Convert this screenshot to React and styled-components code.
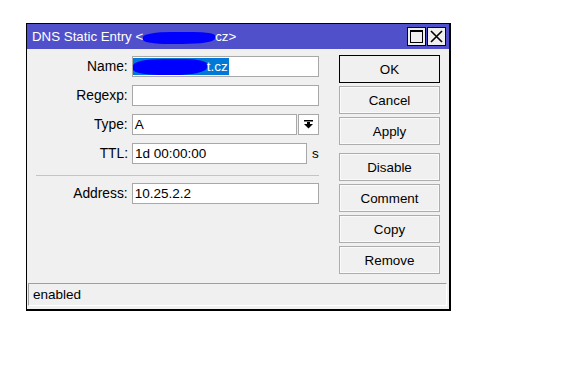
import React from 'react';
import styled, { createGlobalStyle } from 'styled-components';

const Global = createGlobalStyle`
  body {
    margin: 0;
    background: #fff;
    font-family: "Liberation Sans", Arial, sans-serif;
    font-size: 13px;
    color: #000;
  }
`;

const Page = styled.div`
  padding: 23px 0 0 26px;
`;

const Window = styled.div`
  width: 422px;
  height: 285px;
  border: 1px solid #000;
  border-right-width: 2px;
  border-bottom-width: 2px;
  background: #f0f0f0;
  display: flex;
  flex-direction: column;
`;

const TitleBar = styled.div`
  height: 25px;
  background: #5050cb;
  color: #fff;
  display: flex;
  align-items: center;
  padding: 0 3px 0 5px;
  font-size: 13.3px;
`;

const Title = styled.div`
  flex: 1;
  display: flex;
  align-items: center;
  white-space: pre;
`;

const Blob = styled.span`
  display: inline-block;
  width: ${p => p.$w}px;
  height: ${p => p.$h}px;
  background: #0000ff;
  border-radius: 40% 30% 45% 35%;
  transform: ${p => p.$skew || 'none'};
`;

const TitleButtons = styled.div`
  display: flex;
  gap: 1px;
`;

const TitleButton = styled.div`
  width: 17px;
  height: 17px;
  background: #f0f0f0;
  border: 1px solid #000;
  display: flex;
  align-items: center;
  justify-content: center;
`;

const Body = styled.div`
  flex: 1;
  display: flex;
  padding: 7px 9px 0 0;
`;

const Form = styled.div`
  width: 292px;
  display: flex;
  flex-direction: column;
`;

const Row = styled.div`
  display: flex;
  align-items: center;
  height: 21px;
  margin-top: ${p => p.$top ?? 8}px;
`;

const Label = styled.div`
  width: 101px;
  margin-right: 4px;
  text-align: right;
  font-size: 13.8px;
`;

const Field = styled.div`
  box-sizing: border-box;
  width: ${p => p.$w}px;
  height: 21px;
  background: #fff;
  border: 1px solid #a8a8a8;
  padding-left: 2px;
  display: flex;
  align-items: center;
  white-space: pre;
  font-size: 13.5px;
`;

const Selected = styled.span`
  display: inline-flex;
  align-items: center;
  height: 17px;
  background: #0078d7;
  color: #fff;
  padding-right: 1px;
`;

const DropButton = styled.div`
  box-sizing: border-box;
  width: 21px;
  height: 21px;
  margin-left: 1px;
  background: #fff;
  border: 1px solid #a8a8a8;
  display: flex;
  align-items: center;
  justify-content: center;
`;

const Unit = styled.span`
  margin-left: 5px;
  font-size: 13.5px;
`;

const Separator = styled.div`
  height: 1px;
  background: #c4c4c4;
  margin: 11px 0 0 9px;
`;

const Buttons = styled.div`
  margin-left: auto;
  width: 101px;
  display: flex;
  flex-direction: column;
  gap: 3px;
  margin-top: -1px;
`;

const Button = styled.div`
  box-sizing: border-box;
  height: 28px;
  background: #f0f0f0;
  border: 1px solid ${p => (p.$default ? '#000' : '#adadad')};
  box-shadow: inset 0 0 0 1px ${p => (p.$default ? '#f0f0f0' : '#fafafa')};
  display: flex;
  align-items: center;
  justify-content: center;
  font-size: 13.4px;
  margin-top: ${p => (p.$spaced ? 5 : 0)}px;
`;

const StatusBar = styled.div`
  box-sizing: border-box;
  height: 23px;
  margin: 0 2px 3px 1px;
  border-top: 1px solid #a0a0a0;
  border-left: 1px solid #a0a0a0;
  border-right: 1px solid #fff;
  border-bottom: 1px solid #fff;
  display: flex;
  align-items: center;
  padding-left: 4px;
  font-size: 13.5px;
`;

const MaxIcon = () => (
  <svg width="13" height="13" viewBox="0 0 13 13">
    <rect x="0.5" y="0.5" width="12" height="12" fill="none" stroke="#000" />
    <rect x="0" y="0" width="13" height="2" fill="#000" />
  </svg>
);

const CloseIcon = () => (
  <svg width="13" height="13" viewBox="0 0 13 13">
    <path d="M1 1 L12 12 M12 1 L1 12" stroke="#000" strokeWidth="1.6" />
  </svg>
);

const DropIcon = () => (
  <svg width="9" height="9" viewBox="0 0 9 9">
    <rect x="0" y="0" width="9" height="1.5" fill="#000" />
    <rect x="3" y="2" width="3" height="2" fill="#000" />
    <polygon points="0,4 9,4 4.5,8.5" fill="#000" />
  </svg>
);

export default function App() {
  return (
    <>
      <Global />
      <Page>
        <Window>
          <TitleBar>
            <Title>
              DNS Static Entry &lt;
              <Blob $w={72} $h={12} $skew="translateY(1px)" />
              cz&gt;
            </Title>
            <TitleButtons>
              <TitleButton><MaxIcon /></TitleButton>
              <TitleButton><CloseIcon /></TitleButton>
            </TitleButtons>
          </TitleBar>
          <Body>
            <Form>
              <Row $top={0}>
                <Label>Name:</Label>
                <Field $w={188} style={{ paddingLeft: 0 }}>
                  <Selected>
                    <Blob $w={74} $h={16} />
                    t.cz
                  </Selected>
                </Field>
              </Row>
              <Row>
                <Label>Regexp:</Label>
                <Field $w={188} />
              </Row>
              <Row>
                <Label>Type:</Label>
                <Field $w={166}>A</Field>
                <DropButton><DropIcon /></DropButton>
              </Row>
              <Row>
                <Label>TTL:</Label>
                <Field $w={175}>1d 00:00:00</Field>
                <Unit>s</Unit>
              </Row>
              <Separator />
              <Row $top={7}>
                <Label>Address:</Label>
                <Field $w={188}>10.25.2.2</Field>
              </Row>
            </Form>
            <Buttons>
              <Button $default>OK</Button>
              <Button>Cancel</Button>
              <Button>Apply</Button>
              <Button $spaced>Disable</Button>
              <Button>Comment</Button>
              <Button>Copy</Button>
              <Button>Remove</Button>
            </Buttons>
          </Body>
          <StatusBar>enabled</StatusBar>
        </Window>
      </Page>
    </>
  );
}
